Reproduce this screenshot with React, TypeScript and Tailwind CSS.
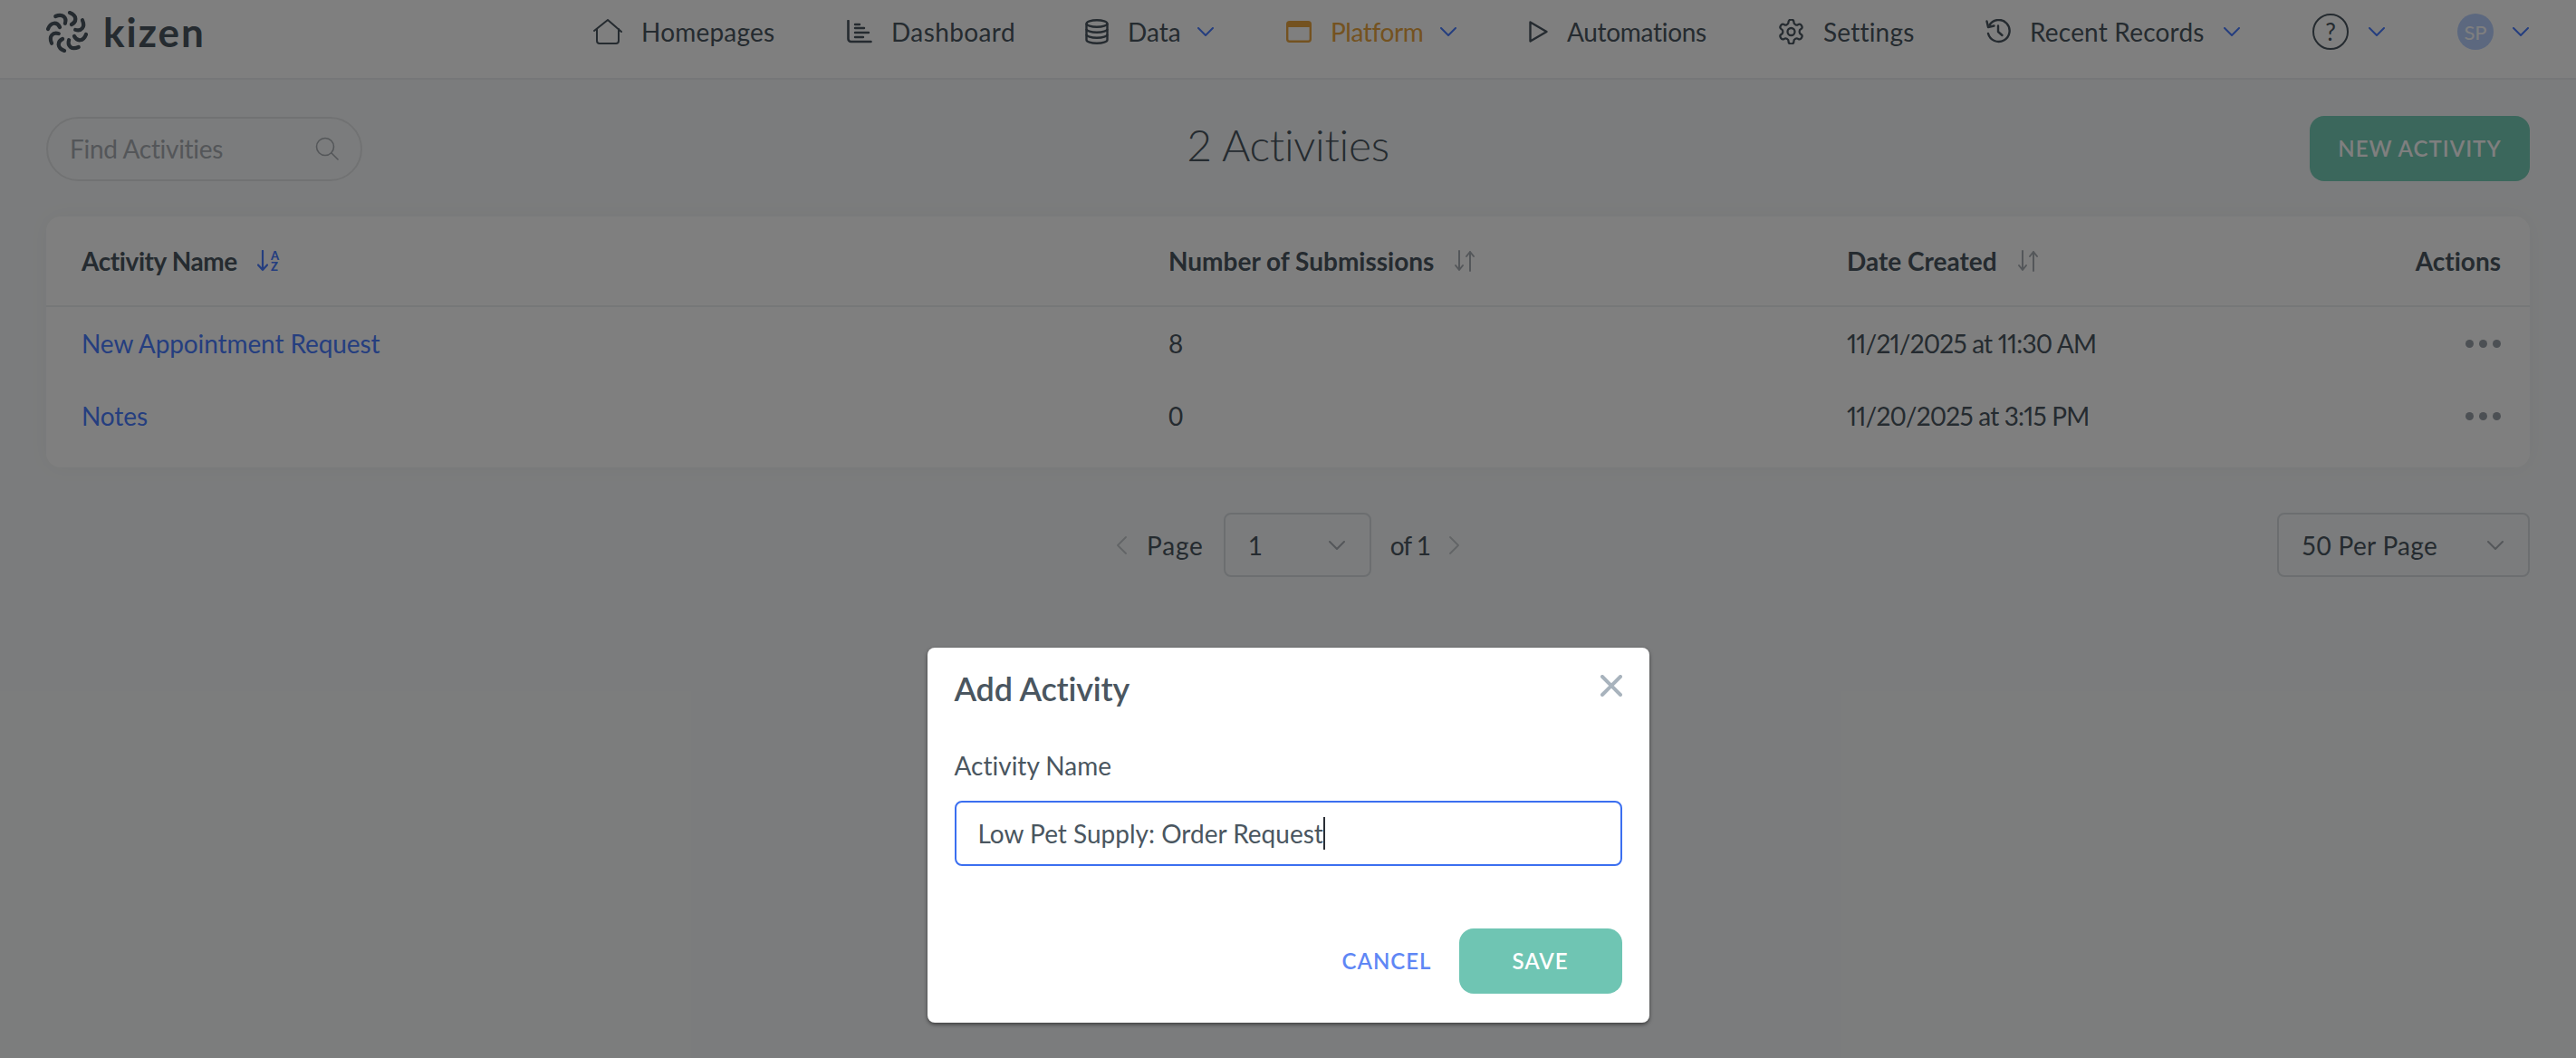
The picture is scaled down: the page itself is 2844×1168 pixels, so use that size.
import React from 'react'

const FONT = "font-['Lato','Liberation_Sans',sans-serif]"

// ── Small drawn icons ────────────────────────────────────────────────────────

function Chevron({ className = 'text-[#4a7dff]' }: { className?: string }) {
  return (
    <svg width="18" height="10" viewBox="0 0 18 10" fill="none" className={className}>
      <path d="M1 1l8 8 8-8" stroke="currentColor" strokeWidth="2" strokeLinecap="round" strokeLinejoin="round" />
    </svg>
  )
}

function KizenMark() {
  const angles = [0, 45, 90, 135, 180, 225, 270, 315]
  return (
    <svg width="48" height="46" viewBox="-24 -23 48 46" fill="none" className="text-[#4a5660]">
      {angles.map((a) => (
        <path
          key={a}
          d="M5 -8 C11 -11 11 -18 3 -21"
          stroke="currentColor"
          strokeWidth="4.2"
          strokeLinecap="round"
          transform={`rotate(${a})`}
        />
      ))}
    </svg>
  )
}

function HomeIcon() {
  return (
    <svg width="32" height="28" viewBox="0 0 32 28" fill="none" stroke="currentColor" strokeWidth="2" strokeLinecap="round" strokeLinejoin="round">
      <path d="M1 13L16 1l15 13" />
      <path d="M4 11v13a3 3 0 0 0 3 3h18a3 3 0 0 0 3-3V11" />
    </svg>
  )
}

function ChartIcon() {
  return (
    <svg width="28" height="26" viewBox="0 0 28 26" fill="none" stroke="currentColor" strokeLinecap="round">
      <path d="M1.5 1v20a3 3 0 0 0 3 3h22" strokeWidth="2.6" />
      <path d="M9 9h10M9 14h15M9 19h9M9 5h5" strokeWidth="2.4" />
    </svg>
  )
}

function DatabaseIcon() {
  return (
    <svg width="26" height="28" viewBox="0 0 26 28" fill="none" stroke="currentColor" strokeWidth="2.4">
      <ellipse cx="13" cy="5" rx="11.5" ry="3.8" />
      <path d="M1.5 5v18c0 2.1 5.1 3.8 11.5 3.8s11.5-1.7 11.5-3.8V5" />
      <path d="M1.5 11c0 2.1 5.1 3.8 11.5 3.8s11.5-1.7 11.5-3.8M1.5 17c0 2.1 5.1 3.8 11.5 3.8s11.5-1.7 11.5-3.8" />
    </svg>
  )
}

function WindowIcon() {
  return (
    <svg width="28" height="24" viewBox="0 0 28 24" fill="none" className="text-[#e9a540]">
      <rect x="1.2" y="1.2" width="25.6" height="21.6" rx="2.5" stroke="currentColor" strokeWidth="2.4" />
      <path d="M1.2 3.5A2.5 2.5 0 0 1 3.7 1.2h20.6a2.5 2.5 0 0 1 2.5 2.3V7H1.2z" fill="currentColor" />
    </svg>
  )
}

function PlayIcon() {
  return (
    <svg width="21" height="24" viewBox="0 0 21 24" fill="none" stroke="currentColor" strokeWidth="2.4" strokeLinejoin="round">
      <path d="M1.5 1.5L19.5 12 1.5 22.5z" />
    </svg>
  )
}

function GearIcon() {
  return (
    <svg width="29" height="28" viewBox="1.5 1.5 21 21" fill="none" stroke="currentColor" strokeWidth="1.7" strokeLinecap="round" strokeLinejoin="round">
      <path d="M12.22 2h-.44a2 2 0 0 0-2 2v.18a2 2 0 0 1-1 1.73l-.43.25a2 2 0 0 1-2 0l-.15-.08a2 2 0 0 0-2.73.73l-.22.38a2 2 0 0 0 .73 2.73l.15.1a2 2 0 0 1 1 1.72v.51a2 2 0 0 1-1 1.74l-.15.09a2 2 0 0 0-.73 2.73l.22.38a2 2 0 0 0 2.73.73l.15-.08a2 2 0 0 1 2 0l.43.25a2 2 0 0 1 1 1.73V20a2 2 0 0 0 2 2h.44a2 2 0 0 0 2-2v-.18a2 2 0 0 1 1-1.73l.43-.25a2 2 0 0 1 2 0l.15.08a2 2 0 0 0 2.73-.73l.22-.39a2 2 0 0 0-.73-2.73l-.15-.08a2 2 0 0 1-1-1.74v-.5a2 2 0 0 1 1-1.74l.15-.09a2 2 0 0 0 .73-2.73l-.22-.38a2 2 0 0 0-2.73-.73l-.15.08a2 2 0 0 1-2 0l-.43-.25a2 2 0 0 1-1-1.73V4a2 2 0 0 0-2-2z" />
      <circle cx="12" cy="12" r="3" />
    </svg>
  )
}

function HistoryIcon() {
  return (
    <svg width="28" height="28" viewBox="0 0 28 28" fill="none" stroke="currentColor" strokeWidth="2.4" strokeLinecap="round" strokeLinejoin="round">
      <path d="M4.5 6.5A12 12 0 1 1 3 16" />
      <path d="M1.5 2.5l1.5 6.5 6.5-1.5" />
      <path d="M14 7.5V14l4.5 4" />
    </svg>
  )
}

function SearchIcon() {
  return (
    <svg width="26" height="26" viewBox="0 0 26 26" fill="none" stroke="currentColor" strokeWidth="1.6" strokeLinecap="round" className="text-[#a8adb3]">
      <circle cx="11" cy="11" r="9.5" />
      <path d="M18 18l7 7" />
    </svg>
  )
}

function SortAz() {
  return (
    <span className="flex items-center gap-[3px] text-[#4a7dff]">
      <svg width="12" height="24" viewBox="0 0 12 24" fill="none">
        <path d="M6 1v21M1 16.5L6 22l5-5.5" stroke="currentColor" strokeWidth="2.2" strokeLinecap="round" strokeLinejoin="round" />
      </svg>
      <span className="flex flex-col text-[13px] font-black leading-[12px]">
        <span>A</span>
        <span>Z</span>
      </span>
    </span>
  )
}

function SortNeutral() {
  return (
    <svg width="24" height="24" viewBox="0 0 24 24" fill="none" className="text-[#a9aeb4]">
      <path d="M6 1v21M2 17l4 5 4-5" stroke="currentColor" strokeWidth="2" strokeLinecap="round" strokeLinejoin="round" />
      <path d="M18 23V2M14 7l4-5 4 5" stroke="currentColor" strokeWidth="2" strokeLinecap="round" strokeLinejoin="round" />
    </svg>
  )
}

function PagerArrow({ flip = false }: { flip?: boolean }) {
  return (
    <svg width="13" height="20" viewBox="0 0 13 20" fill="none" stroke="currentColor" strokeWidth="1.8" strokeLinecap="round" strokeLinejoin="round" className="text-[#c4c8cd]">
      <path d={flip ? 'M2 1l9 9-9 9' : 'M11 1l-9 9 9 9'} />
    </svg>
  )
}

// ── Data ─────────────────────────────────────────────────────────────────────

const NAV_ITEMS = [
  { label: 'Homepages', icon: <HomeIcon />, text: 'w-[147px] tracking-[0.2px]' },
  { label: 'Dashboard', icon: <ChartIcon />, text: 'w-[134px] tracking-[0.4px]' },
  { label: 'Data', icon: <DatabaseIcon />, text: 'w-[56px]', caret: true },
  { label: 'Platform', icon: <WindowIcon />, text: 'w-[100px] tracking-[-0.4px]', caret: true, active: true },
  { label: 'Automations', icon: <PlayIcon />, text: 'w-[153px] tracking-[-0.3px]' },
  { label: 'Settings', icon: <GearIcon />, text: 'w-[99px] tracking-[0.2px]' },
  { label: 'Recent Records', icon: <HistoryIcon />, text: 'w-[193px] tracking-[0.2px]', caret: true },
]

const ROWS = [
  { name: 'New Appointment Request', count: '8', created: '11/21/2025 at 11:30 AM' },
  { name: 'Notes', count: '0', created: '11/20/2025 at 3:15 PM' },
]

const COLS = 'grid grid-cols-[1200px_749px_1fr_auto] items-center pl-[39px] pr-[32px]'

function Dots() {
  return (
    <div className="flex gap-[6px] justify-self-end">
      <span className="w-[9px] h-[9px] rounded-full bg-[#99a0a8]" />
      <span className="w-[9px] h-[9px] rounded-full bg-[#99a0a8]" />
      <span className="w-[9px] h-[9px] rounded-full bg-[#99a0a8]" />
    </div>
  )
}

export default function App() {
  return (
    <div className={`relative h-[1168px] w-full overflow-hidden bg-[#f7f9fa] text-[#4a5660] text-[28px] [font-variant-ligatures:none] ${FONT}`}>
      {/* Header */}
      <header className="flex items-center h-[88px] pl-[50px] pr-[52px] pb-4 bg-white border-b-2 border-[#eceef0]">
        <div className="flex items-center gap-4">
          <KizenMark />
          <span className="text-[44px] font-bold leading-none tracking-[2px]">kizen</span>
        </div>
        <nav className="ml-auto flex items-center gap-20">
          {NAV_ITEMS.map((item) => (
            <div key={item.label} className={`flex items-center gap-[21px] ${item.active ? 'text-[#e9a540]' : ''}`}>
              <span className="flex">{item.icon}</span>
              <span className={`whitespace-nowrap ${item.text}`}>{item.label}</span>
              {item.caret && <Chevron />}
            </div>
          ))}
          <div className="flex items-center gap-[22px]">
            <span className="flex items-center justify-center w-10 h-10 rounded-full border-2 border-[#4a5660] text-[26px]">?</span>
            <Chevron />
          </div>
          <div className="flex items-center gap-[21px]">
            <span className="flex items-center justify-center w-10 h-10 rounded-full bg-[#b8d0ff] text-white text-[22px]">SP</span>
            <Chevron />
          </div>
        </nav>
      </header>

      <main className="px-[51px]">
        {/* Toolbar */}
        <div className="relative flex items-center justify-between pt-10 pb-[39px]">
          <div className="flex items-center justify-between w-[349px] h-[71px] pl-6 pr-6 rounded-full border-2 border-[#e2e4e6]">
            <span className="text-[#a8adb3] tracking-[-0.3px]">Find Activities</span>
            <SearchIcon />
          </div>
          <h1 className="absolute left-0 right-0 top-[36px] text-center text-[48px] font-light tracking-[-0.3px]">2 Activities</h1>
          <button className="w-[243px] h-[72px] rounded-2xl bg-[#76ceb8] text-white text-[24px] font-semibold tracking-[1px]">
            NEW ACTIVITY
          </button>
        </div>

        {/* Table */}
        <section className="bg-white rounded-2xl shadow-[0_0_24px_rgba(0,0,0,0.04)] pb-[17px]">
          <div className={`${COLS} h-[100px] border-b-2 border-[#eceef0] font-bold`}>
            <div className="flex items-center gap-[22px]"><span className="tracking-[-0.4px]">Activity Name</span><SortAz /></div>
            <div className="flex items-center gap-[22px]"><span>Number of Submissions</span><SortNeutral /></div>
            <div className="flex items-center gap-[22px]"><span>Date Created</span><SortNeutral /></div>
            <div>Actions</div>
          </div>
          {ROWS.map((row) => (
            <div key={row.name} className={`${COLS} h-20`}>
              <a className="text-[#4a7dff] tracking-[-0.1px]">{row.name}</a>
              <div>{row.count}</div>
              <div className="proportional-nums tracking-[-0.8px]">{row.created}</div>
              <Dots />
            </div>
          ))}
        </section>

        {/* Pagination */}
        <div className="relative flex items-center justify-end mt-[50px]">
          <div className="absolute left-0 right-0 flex items-center justify-center">
            <PagerArrow />
            <span className="ml-[21px] tracking-[0.8px]">Page</span>
            <div className="flex items-center justify-between ml-[22px] w-[163px] h-[71px] pl-[25px] pr-[27px] rounded-lg border-2 border-[#d8dde1]">
              <span>1</span>
              <Chevron className="text-[#a9aeb4]" />
            </div>
            <span className="ml-[21px] tracking-[-1px]">of 1</span>
            <span className="ml-5 flex"><PagerArrow flip /></span>
          </div>
          <div className="relative flex items-center justify-between w-[279px] h-[71px] pl-[25px] pr-[27px] rounded-lg border-2 border-[#d8dde1]">
            <span className="tracking-[0.3px]">50 Per Page</span>
            <Chevron className="text-[#a9aeb4]" />
          </div>
        </div>
      </main>

      {/* Dimmed backdrop + dialog */}
      <div className="absolute inset-0 bg-black/50 flex justify-center items-start pt-[715px]">
        <div className="w-[797px] h-[414px] bg-white rounded-lg shadow-[0_2px_4px_rgba(0,0,0,0.5)] px-[30px] pt-[22px]">
          <div className="flex items-start justify-between">
            <h2 className="text-[36px] font-semibold leading-[46px] tracking-[-0.2px]">Add Activity</h2>
            <svg width="24" height="24" viewBox="0 0 24 24" fill="none" stroke="#a8b3bd" strokeWidth="4" strokeLinecap="round" className="mt-2">
              <path d="M2 2l20 20M22 2L2 22" />
            </svg>
          </div>
          <label className="block mt-[46px] leading-8">Activity Name</label>
          <div className="flex items-center mt-[23px] h-[72px] pl-6 rounded-lg border-2 border-[#3b6ff0]">
            <span>Low Pet Supply: Order Request</span>
            <span className="w-0.5 h-9 bg-[#2a2f36]" />
          </div>
          <div className="flex items-center justify-end gap-[30px] mt-[69px]">
            <button className="text-[#5f87f5] text-[24px] font-semibold tracking-[1px]">CANCEL</button>
            <button className="w-[180px] h-[72px] rounded-2xl bg-[#6fc5b3] text-white text-[24px] font-semibold tracking-[1px]">SAVE</button>
          </div>
        </div>
      </div>
    </div>
  )
}
